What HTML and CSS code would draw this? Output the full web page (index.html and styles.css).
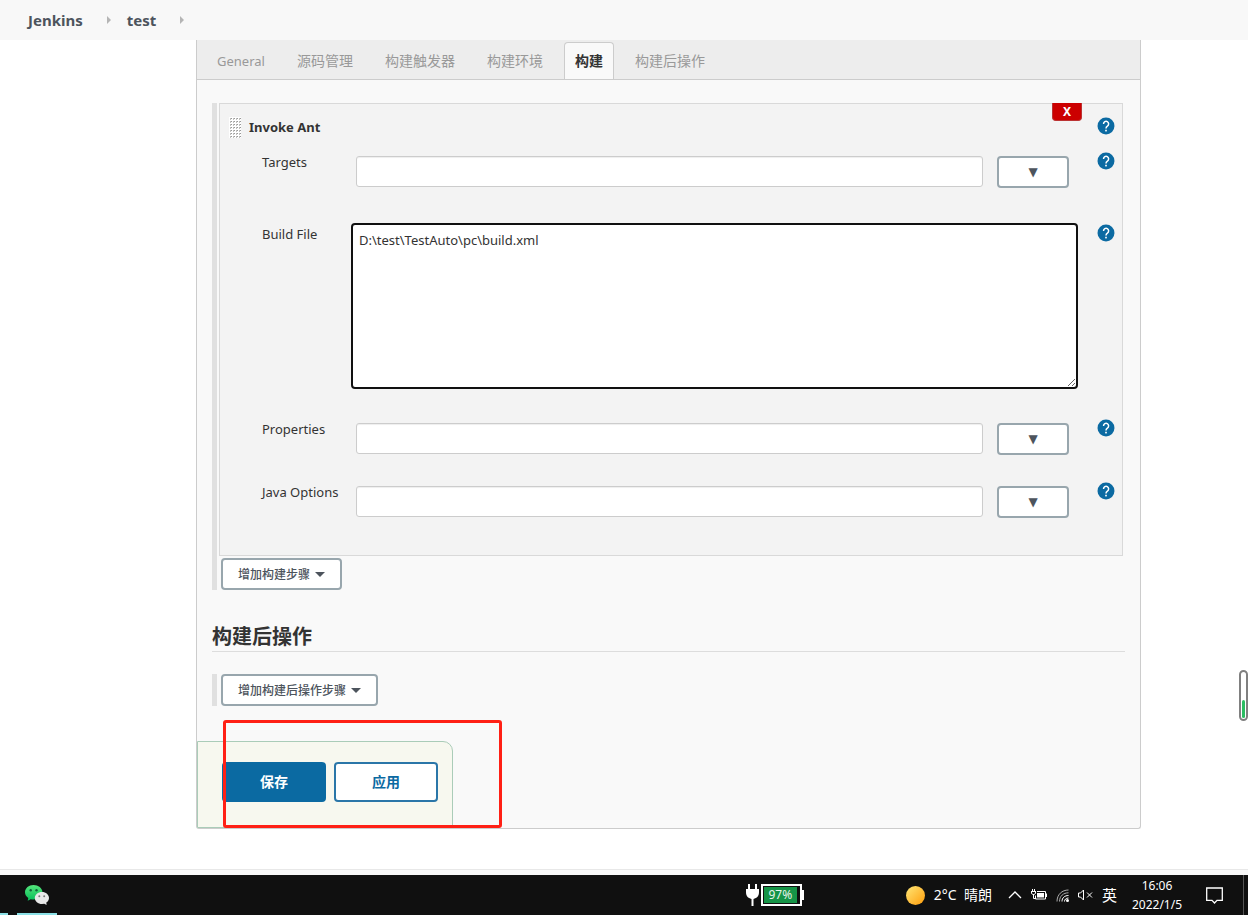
FILE: index.html
```html
<!DOCTYPE html>
<html lang="zh-CN">
<head>
<meta charset="utf-8">
<meta name="viewport" content="width=device-width, initial-scale=1">
<title>test Config [Jenkins]</title>
<link rel="stylesheet" href="styles.css">
</head>
<body>
<svg class="sprite" aria-hidden="true">
  <symbol id="help" viewBox="0 0 24 24">
    <circle cx="12" cy="12" r="11.3" fill="#0b6aa2"/>
    <path d="M8.700 9.200a3.400 3.400 0 1 1 5.200 2.900c-1.300.9-1.900 1.600-1.900 3.200" fill="none" stroke="#fff" stroke-width="2"/>
    <rect x="10.900" y="17" width="2.200" height="2.200" fill="#fff"/>
  </symbol>
</svg>

<nav class="crumbs" aria-label="Breadcrumb">
  <a href="#">Jenkins</a><span class="crumb-arrow"></span>
  <a href="#">test</a><span class="crumb-arrow"></span>
</nav>

<main class="config">
  <nav class="tabs">
    <a class="tab" href="#general">General</a>
    <a class="tab" href="#scm">源码管理</a>
    <a class="tab" href="#triggers">构建触发器</a>
    <a class="tab" href="#env">构建环境</a>
    <a class="tab active" href="#build">构建</a>
    <a class="tab" href="#post">构建后操作</a>
  </nav>

  <form class="form">
    <section class="group" id="build">
      <div class="step">
        <button class="remove" type="button">X</button>
        <div class="step-head">
          <svg class="grip" viewBox="0 0 12 21" aria-hidden="true">
            <defs><pattern id="dots" width="3" height="3" patternUnits="userSpaceOnUse"><rect width="3" height="3" fill="#fff"/><path d="M1 1h2v1h-1v1h-1z" fill="#c0c0bd"/><rect x="2" y="1" width="1" height="1" fill="#999"/></pattern></defs>
            <rect width="12" height="21" fill="url(#dots)"/>
          </svg>
          <strong>Invoke Ant</strong>
          <button class="help" type="button" aria-label="Help"><svg><use href="#help"/></svg></button>
        </div>
        <div class="row">
          <label for="targets">Targets</label>
          <div class="control"><input class="text" id="targets" type="text"><button class="btn expand" type="button">▼</button></div>
          <button class="help" type="button" aria-label="Help"><svg><use href="#help"/></svg></button>
        </div>
        <div class="row tall">
          <label for="buildfile">Build File</label>
          <textarea class="area" id="buildfile" spellcheck="false">D:\test\TestAuto\pc\build.xml</textarea>
          <button class="help" type="button" aria-label="Help"><svg><use href="#help"/></svg></button>
        </div>
        <div class="row compact">
          <label for="properties">Properties</label>
          <div class="control"><input class="text" id="properties" type="text"><button class="btn expand" type="button">▼</button></div>
          <button class="help" type="button" aria-label="Help"><svg><use href="#help"/></svg></button>
        </div>
        <div class="row">
          <label for="javaopts">Java Options</label>
          <div class="control"><input class="text" id="javaopts" type="text"><button class="btn expand" type="button">▼</button></div>
          <button class="help" type="button" aria-label="Help"><svg><use href="#help"/></svg></button>
        </div>
      </div>
      <button class="btn add" type="button">增加构建步骤<span class="caret"></span></button>
    </section>

    <h2 id="post">构建后操作</h2>
    <section class="group">
      <button class="btn add" type="button">增加构建后操作步骤<span class="caret"></span></button>
    </section>
  </form>

  <div class="save-bar">
    <button class="action primary" type="submit">保存</button>
    <button class="action" type="button">应用</button>
    <div class="marker"></div>
  </div>
</main>

<div class="page-foot"></div>
<div class="meter"><span class="meter-fill"></span></div>

<footer class="taskbar">
  <span class="app-edge"></span>
  <button class="app" type="button" aria-label="WeChat">
    <svg width="24" height="20" viewBox="0 0 24 20">
      <defs><linearGradient id="wg" x2="0" y2="1"><stop stop-color="#55e67c"/><stop offset="1" stop-color="#05bd58"/></linearGradient></defs>
      <path d="M8.5 0C3.8 0 0 3.2 0 7.3c0 2.400 1.300 4.400 3.300 5.700l-.6 2.700 3-1.500c5.800 1.300 11.800-1.500 11.800-6.900C17.500 3.200 13.300 0 8.500 0z" fill="url(#wg)"/>
      <circle cx="5.700" cy="5.200" r="1.200" fill="#12653a"/><circle cx="11.500" cy="5.200" r="1.200" fill="#12653a"/>
      <path d="M17 7c-4 0-7.200 2.700-7.200 6s3.200 6 7.200 6l2.300-.3 2.300 1.300-.3-2.400c1.700-1.100 2.700-2.700 2.700-4.600 0-3.300-3-6-7-6z" fill="#e8e8e8"/>
      <circle cx="14.300" cy="11.200" r="1" fill="#777"/><circle cx="19.200" cy="11.200" r="1" fill="#777"/>
    </svg>
  </button>
  <div class="power">
    <svg width="13" height="22" viewBox="0 0 13 22"><path d="M2 0h2v5h5V0h2v5h2v3c0 4-2 6-5.500 7v7h-2v-7C2 14 0 12 0 8V5h2z" fill="#fff"/></svg>
    <span class="battery"><span class="battery-level">97%</span></span>
  </div>
  <div class="tray">
    <span class="sun"></span>
    <span class="weather">2°C&nbsp; 晴朗</span>
    <svg width="14" height="8" viewBox="0 0 14 8"><path d="M1 7l6-6 6 6" fill="none" stroke="#fff" stroke-width="1.300"/></svg>
    <svg width="16" height="12" viewBox="0 0 16 12"><path d="M1.500 0v2M3.500 0v2M0 2.500h5M.5 2.500v2l1.500 1h1l1.500-1v-2M2.500 5.500v4h2M6 2.500h8.500v7.500H4.500V6.500" fill="none" stroke="#fff"/><path d="M6 4h7v4.500H6zM15 4.500h1v3.500h-1z" fill="#fff"/></svg>
    <svg width="13" height="13" viewBox="0 0 13 13" fill="none"><path d="M1 12.500C1 5.500 6 1 12.500 1M3.500 12.500C3.500 7 7.500 3.800 12.500 3.800" stroke="#aaa"/><path d="M6 12.500c0-3.700 2.700-6 6.500-6M8.500 12.500c0-2 1.500-3.500 4-3.500" stroke="#fff"/><circle cx="11.500" cy="11.500" r="1.500" fill="#fff"/></svg>
    <svg width="15" height="12" viewBox="0 0 15 12"><path d="M.5 4v4H2.500l3 3V1L2.500 4zM9 3.500l5 5M14 3.500l-5 5" fill="none" stroke="#fff"/></svg>
    <span class="ime">英</span>
    <span class="clock"><span>16:06</span><span>2022/1/5</span></span>
    <svg width="17" height="17" viewBox="0 0 17 17"><path d="M.7 1h15.600v12.300h-5.300L8.500 16 6 13.300H.7z" fill="none" stroke="#fff" stroke-width="1.300"/></svg>
  </div>
  <span class="show-desktop"></span>
</footer>
</body>
</html>
```
FILE: styles.css
```css
* { box-sizing: border-box; }

body {
  margin: 0;
  min-height: 100vh;
  display: flex;
  flex-direction: column;
  background: #fff;
  color: #333;
  font: 13px/20px "Noto Sans", "Noto Sans CJK SC", sans-serif;
}

button, input, textarea { font: inherit; color: inherit; margin: 0; }
a { color: inherit; text-decoration: none; }
.sprite { position: absolute; width: 0; height: 0; }

.crumbs {
  display: flex;
  align-items: center;
  height: 40px;
  padding-left: 28px;
  background: #f8f8f8;
  color: #4d545d;
  font-size: 15px;
  font-weight: 700;
}
.crumb-arrow {
  margin: 0 16px 0 24px;
  border: 4px solid transparent;
  border-left-color: #b5b5b5;
  border-right: 0;
}

.config {
  margin: 0 107px 0 196px;
  border: 1px solid #ccc;
  border-top: 0;
  border-radius: 0 0 3px 3px;
  background: #f9f9f9;
}

.tabs {
  display: flex;
  height: 40px;
  padding: 2px 0 0 9px;
  background: #ededed;
  border-bottom: 1px solid #ccc;
}
.tab {
  padding: 8px 10px;
  margin-right: 10px;
  border: 1px solid transparent;
  border-bottom: 0;
  color: #999;
  font-size: 14px;
}
.tab:first-child { font-size: 13px; }
.tab.active {
  border-color: #ccc;
  border-radius: 4px 4px 0 0;
  background: #f9f9f9;
  color: #333;
  font-weight: 700;
}

.form { padding: 23px 15px 0; }
.group {
  border-left: 5px solid #e0e0e0;
  padding: 0 2px;
}
.step {
  position: relative;
  border: 1px solid #d9d9d9;
  background: #f3f3f3;
  padding: 13px 7px 1px 9px;
  margin-bottom: 2px;
}
.remove {
  position: absolute;
  top: -1px;
  right: 40px;
  width: 30px;
  height: 18px;
  padding: 0;
  border: 1px solid #b33;
  border-top: 0;
  border-radius: 0 0 4px 4px;
  background: #c00;
  color: #fff;
  font-size: 12px;
  font-weight: 700;
  line-height: 16px;
}
.step-head {
  display: flex;
  align-items: center;
  height: 20px;
  margin-bottom: 15px;
}
.grip { width: 12px; height: 21px; margin-right: 8px; }
.step-head .help { align-self: flex-start; margin-left: auto; }
.help {
  width: 18px;
  height: 18px;
  padding: 0;
  border: 0;
  background: none;
}
.help svg { display: block; width: 18px; height: 18px; }

.row {
  display: grid;
  grid-template-columns: 89px 1fr 37px;
  align-items: start;
  padding: 0 0 36px 33px;
}
.row .help { justify-self: end; }
.row.compact { padding-bottom: 27px; }
.row.tall { padding-bottom: 30px; }
.control {
  display: flex;
  gap: 14px;
  padding: 4px 9px 0 5px;
}
.text {
  flex: 1;
  min-width: 0;
  height: 31px;
  padding: 4px 6px;
  border: 1px solid #ccc;
  border-radius: 3px;
  background: #fff;
  box-shadow: inset 0 1px 1px #eee;
}
.area {
  display: block;
  width: 100%;
  height: 166px;
  margin-top: -1px;
  padding: 5px 6px;
  border: 2px solid #101010;
  border-radius: 4px;
  background: #fff;
  resize: vertical;
}

.btn {
  height: 32px;
  border: 2px solid #98a6ad;
  border-radius: 4px;
  background: #fff;
  color: #4d545d;
  font-size: 12px;
  font-weight: 500;
}
.expand { width: 72px; padding: 0; font-family: "DejaVu Sans", sans-serif; }
.add {
  display: flex;
  align-items: center;
  margin-left: 2px;
  padding: 1px 15px 0;
}
.caret {
  margin-left: 5px;
  border: 5px solid transparent;
  border-top-color: #4d545d;
  border-bottom: 0;
}

h2 {
  margin: 32px 0 22px;
  border-bottom: 1px solid #ddd;
  font-size: 20px;
  line-height: 29px;
}

.save-bar {
  position: relative;
  display: flex;
  gap: 8px;
  width: 256px;
  margin-top: 35px;
  padding: 20px 14px 25px 24px;
  border: 1px solid #aaccb8;
  border-radius: 0 10px 0 0;
  background: #f7f8ef;
}
.action {
  flex: 1;
  height: 40px;
  padding: 0;
  border: 2px solid #2a76a8;
  border-radius: 4px;
  background: #fff;
  color: #0b6aa2;
  font-size: 14px;
  font-weight: 700;
}
.action.primary { border-color: #0b6aa2; background: #0b6aa2; color: #fff; }
.marker {
  position: absolute;
  inset: -22px -50px -1px 25px;
  border: 3px solid #ff2015;
  border-radius: 3px;
  pointer-events: none;
}

.page-foot {
  height: 6px;
  margin-top: auto;
  border-top: 1px solid #e8e8e8;
  background: #f8f8f8;
}
.meter {
  position: fixed;
  right: 0;
  bottom: 194px;
  display: flex;
  align-items: flex-end;
  width: 9px;
  height: 51px;
  padding: 1px;
  border: 2px solid #808080;
  border-radius: 5px;
  background: #fff;
}
.meter-fill { width: 100%; height: 18px; border-radius: 2px; background: #2bbd62; }

.taskbar {
  display: flex;
  align-items: center;
  height: 40px;
  background: #101010;
  color: #fff;
}
.app-edge { align-self: flex-end; width: 8px; height: 2px; background: #8be0e6; }
.app {
  align-self: stretch;
  width: 40px;
  margin-left: 9px;
  padding: 2px 0 0;
  border: 0;
  border-bottom: 2px solid #8be0e6;
  background: none;
}
.app svg { display: block; margin: 0 auto; }
.power { display: flex; align-items: center; gap: 2px; margin-left: auto; }
.battery {
  position: relative;
  width: 41px;
  height: 22px;
  padding: 1px 3px 1px 1px;
  border: 2px solid #fff;
}
.battery::after {
  content: "";
  position: absolute;
  top: 4px;
  right: -4px;
  width: 3px;
  height: 10px;
  background: #fff;
}
.battery-level {
  display: block;
  height: 16px;
  background: #169447;
  color: #e8f3ea;
  font-size: 12px;
  line-height: 16px;
  text-align: center;
}
.tray { display: flex; align-items: center; gap: 9px; margin-left: 104px; }
.sun {
  width: 19px;
  height: 19px;
  border-radius: 50%;
  background: linear-gradient(135deg, #ffe777, #ff9d0a);
}
.weather { margin-right: 7px; font-size: 14px; }
.ime { font-size: 15px; }
.clock {
  display: flex;
  flex-direction: column;
  align-items: center;
  width: 52px;
  margin: 0 14px 0 5px;
  font-size: 12px;
  line-height: 19px;
}
.show-desktop { align-self: stretch; width: 5px; margin-left: 20px; border-left: 1px solid #555; }
```
